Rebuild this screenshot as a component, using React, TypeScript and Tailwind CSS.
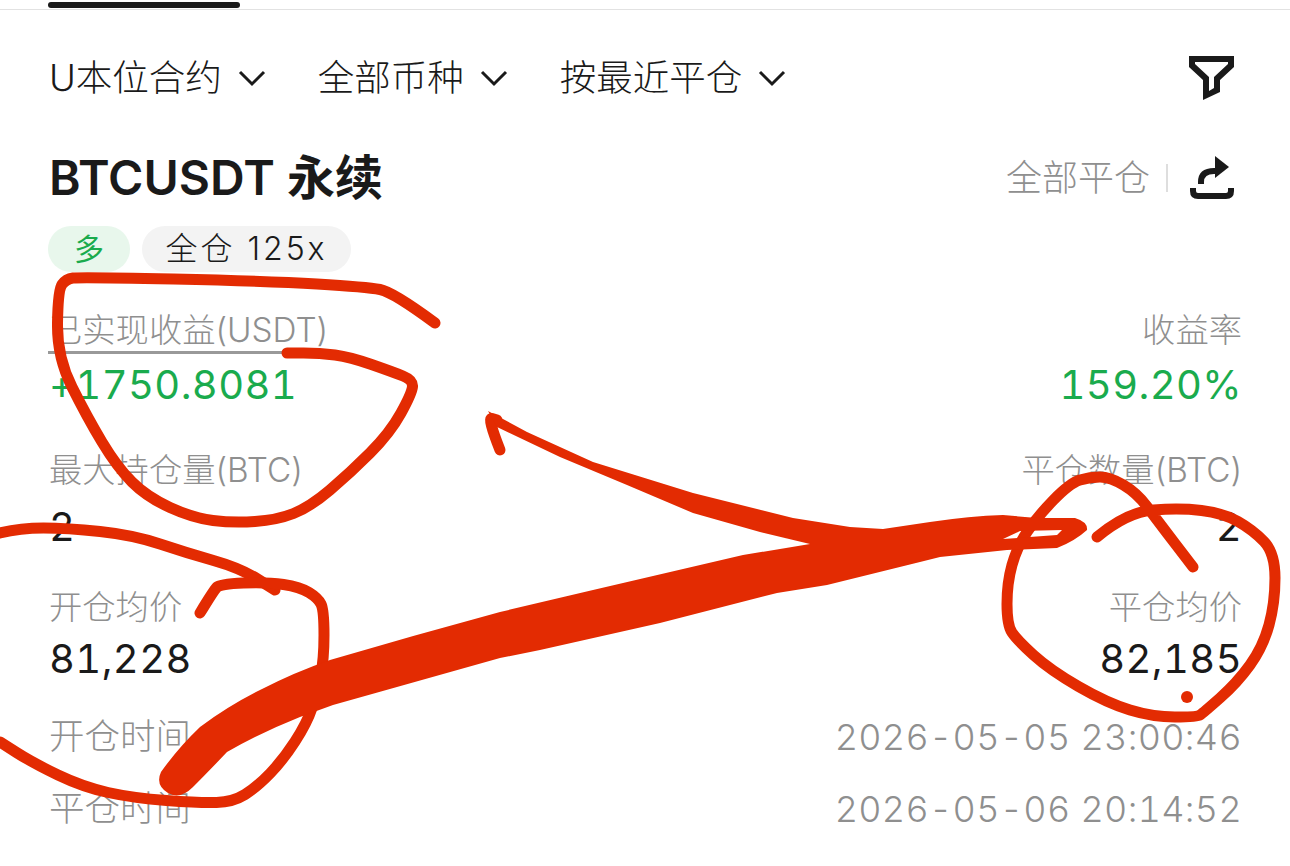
const red = "#e32b02";

// hand drawn marks over the screenshot, smoothed through their midpoints
const smooth = (p: number[][]) => {
  let d = `M${p[0][0]} ${p[0][1]}`;
  for (let i = 1; i < p.length - 1; i++) {
    const mx = (p[i][0] + p[i + 1][0]) / 2;
    const my = (p[i][1] + p[i + 1][1]) / 2;
    d += ` Q${p[i][0]} ${p[i][1]} ${mx} ${my}`;
  }
  const last = p[p.length - 1];
  return d + ` L${last[0]} ${last[1]}`;
};

const strokes = [
  [[435, 323], [393, 292], [367, 287], [267, 281], [80, 277], [66, 279], [58, 290], [57, 357], [87, 417], [117, 467], [147, 497], [193, 518], [233, 523], [277, 520], [310, 507], [350, 473], [390, 433], [412, 393], [413, 380], [393, 372], [350, 357], [320, 353], [287, 353]],
  [[0, 533], [20, 528], [67, 528], [133, 535], [187, 553], [240, 568], [275, 590]],
  [[200, 613], [214, 590], [220, 584], [267, 582], [300, 587], [318, 598], [324, 610], [324, 660], [317, 693], [307, 723], [283, 760], [257, 787], [233, 802], [200, 803], [133, 798], [83, 787], [33, 763], [0, 742]],
  [[1097, 537], [1127, 512], [1180, 508], [1223, 513], [1253, 530], [1275, 553], [1275, 603], [1263, 647], [1237, 683], [1203, 713], [1197, 717], [1153, 717], [1107, 703], [1050, 670], [1017, 640], [1007, 625], [1007, 583], [1017, 547], [1037, 517], [1070, 483], [1090, 477], [1110, 477], [1137, 493], [1157, 520], [1193, 567]],
  [[500, 450], [487, 417], [497, 420]],
];

const Marks = () => (
  <svg className="absolute inset-0 z-10" width="1290" height="866" viewBox="0 0 1290 866" fill="none">
    {strokes.map((s, i) => (
      <path key={i} d={smooth(s)} stroke={red} strokeWidth={11} strokeLinecap="round" strokeLinejoin="round" />
    ))}
    <path
      fill={red}
      fillRule="evenodd"
      d="M161 772 Q178 748 200 727 Q228 706 260 690 Q295 672 330 660 Q415 635 500 612 L593 590 L743 555 L810 544 L760 532 L693 513 L627 485 L560 457 L497 427 L488 411 L527 432 L593 462 L693 493 L793 518 L850 527 L883 529 L930 522 Q970 516 1003 515 L1037 518 L1075 518 Q1088 522 1087 530 Q1075 541 1057 548 L1007 550 L940 557 L920 562 L827 585 L777 593 L660 623 L540 650 L500 658 L333 705 L300 717 Q260 733 227 752 Q210 770 193 787 Q180 800 168 793 Q155 785 161 772 Z M1003 539 L1057 535 L1062 530 L1020 531 Z"
    />
    <circle cx="1187" cy="697" r="6" fill={red} />
  </svg>
);

const Chevron = () => (
  <svg width="30" height="18" viewBox="0 0 30 18" fill="none">
    <path d="M3 3 L15 15 L27 3" stroke="#1a1a1a" strokeWidth="3" />
  </svg>
);

const Filter = ({ label, className = "" }: { label: string; className?: string }) => (
  <div className={`flex items-center gap-[15px] ${className}`}>
    <span className="text-[36.5px] font-light leading-[48px] text-[#1a1a1a]">{label}</span>
    <Chevron />
  </div>
);

const FunnelIcon = () => (
  <svg width="46" height="46" viewBox="0 0 46 46">
    <path
      fillRule="evenodd"
      fill="#1a1a1a"
      d="M0 0 H45 V11 L31 24 V36 L14 44 V24 L0 11 Z M7 6 H39 V8 L25 21 V32 L20 35 V21 L6 8 V6 Z"
    />
  </svg>
);

const ShareIcon = () => (
  <svg width="44" height="44" viewBox="0 0 44 44" fill="none">
    <path d="M11 28 V26 Q11 15 24 15 H26" stroke="#1a1a1a" strokeWidth="6" />
    <path d="M25 0 L39 11 L25 22 Z" fill="#1a1a1a" />
    <path d="M3 32 V35 Q3 40 8 40 H36 Q41 40 41 35 V32" stroke="#1a1a1a" strokeWidth="6" />
  </svg>
);

const Label = ({ children, className = "" }: { children: React.ReactNode; className?: string }) => (
  <div className={`whitespace-nowrap text-[33.3px] font-light leading-[40px] text-[#8f8f8f] ${className}`}>{children}</div>
);

const Value = ({ children, className = "" }: { children: React.ReactNode; className?: string }) => (
  <div className={`text-[40px] leading-[44px] tracking-[0.4px] text-[#1a1a1a] tabular-nums ${className}`}>{children}</div>
);

const Row = ({ children, className = "" }: { children: React.ReactNode; className?: string }) => (
  <div className={`flex justify-between ${className}`}>{children}</div>
);

const Right = ({ children }: { children: React.ReactNode }) => <div className="text-right">{children}</div>;

const Time = ({ children }: { children: React.ReactNode }) => (
  <span className="text-[36px] font-light leading-[40px] tracking-[0.3px] text-[#8f8f8f] tabular-nums">{children}</span>
);

export default function App() {
  return (
    <div
      className="relative h-[866px] w-[1290px] overflow-hidden bg-white"
      style={{ fontFamily: 'Inter, "Noto Sans CJK SC", sans-serif' }}
    >
      <div className="h-[10px] border-b border-b-[#e2e2e2] pt-[2px]">
        <div className="ml-[48px] h-[6px] w-[192px] rounded-sm bg-[#1a1a1a]" />
      </div>

      <div className="pl-[49px] pr-[48px]">
        <div className="mt-[44px] flex h-[48px] items-center">
          <Filter label="U本位合约" />
          <Filter label="全部币种" className="ml-[51px]" />
          <Filter label="按最近平仓" className="ml-[51px]" />
          <div className="ml-auto mr-[7px] mt-[2px]">
            <FunnelIcon />
          </div>
        </div>

        <div className="mt-[46px] flex h-[60px] items-center justify-between">
          <div className="text-[48px] font-semibold leading-[60px] text-[#1a1a1a]">BTCUSDT 永续</div>
          <div className="flex items-center">
            <span className="text-[36px] font-light text-[#8f8f8f]">全部平仓</span>
            <span className="ml-[16px] h-[28px] w-[2px] bg-[#dedede]" />
            <span className="ml-[22px] mr-[8px]">
              <ShareIcon />
            </span>
          </div>
        </div>

        <div className="-ml-[1px] mt-[18px] flex gap-[12px]">
          <div className="flex h-[46px] w-[82px] items-center justify-center rounded-full bg-[#e8f7ec] text-[30px] text-[#1aab4d]">多</div>
          <div className="flex h-[46px] w-[209px] items-center justify-center rounded-full bg-[#f3f3f3] text-[32px] font-light tracking-[3px] text-[#1a1a1a]">全仓 125x</div>
        </div>

        <Row className="mt-[38px]">
          <div>
            <Label className="-ml-[1px] h-[44px] w-[237px] border-b-[3px] border-b-[#999999] pl-[1px]">已实现收益(USDT)</Label>
            <Value className="mt-[9px] !text-[#1aab4d]">+1750.8081</Value>
          </div>
          <Right>
            <Label className="h-[44px]">收益率</Label>
            <Value className="mt-[9px] !text-[#1aab4d]">159.20%</Value>
          </Right>
        </Row>

        <Row className="mt-[43px]">
          <div>
            <Label>最大持仓量(BTC)</Label>
            <Value className="mt-[15px]">2</Value>
          </div>
          <Right>
            <Label>平仓数量(BTC)</Label>
            <Value className="mt-[15px]">2</Value>
          </Right>
        </Row>

        <Row className="mt-[38px]">
          <div>
            <Label>开仓均价</Label>
            <Value className="mt-[10px]">81,228</Value>
          </div>
          <Right>
            <Label>平仓均价</Label>
            <Value className="mt-[10px]">82,185</Value>
          </Right>
        </Row>

        <Row className="mt-[36px] items-center">
          <Label className="!text-[35.5px]">开仓时间</Label>
          <Time>2026-05-05 23:00:46</Time>
        </Row>

        <Row className="mt-[32px] items-center">
          <Label className="!text-[35.5px]">平仓时间</Label>
          <Time>2026-05-06 20:14:52</Time>
        </Row>
      </div>

      <Marks />
    </div>
  );
}
